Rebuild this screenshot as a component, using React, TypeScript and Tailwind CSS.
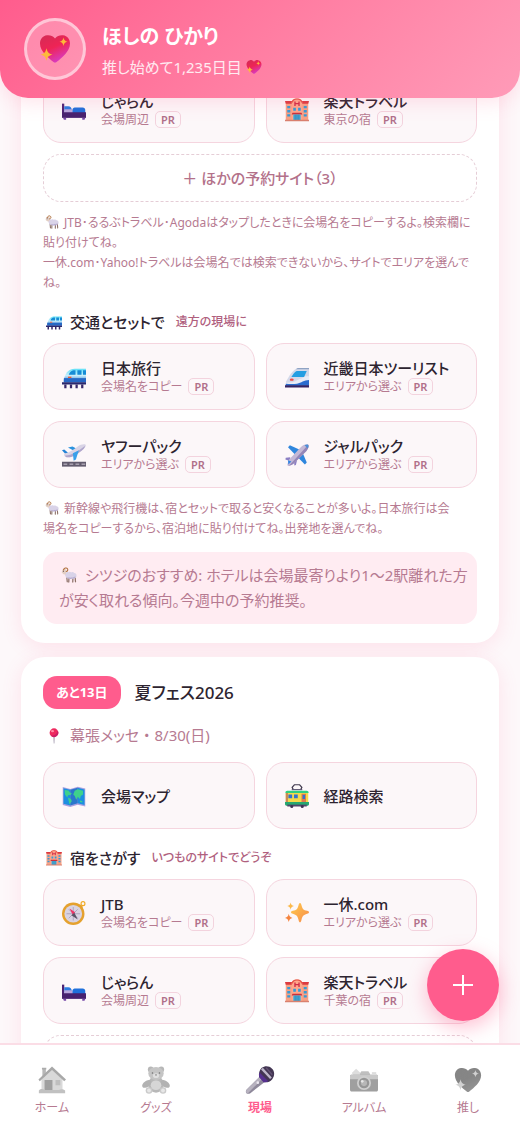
import type { ReactNode } from 'react';
import { clsx } from 'clsx';

type IconName =
    | 'heart'
    | 'bed'
    | 'hotel'
    | 'sheep'
    | 'monorail'
    | 'bullet'
    | 'takeoff'
    | 'plane'
    | 'pin'
    | 'map'
    | 'tram'
    | 'compass'
    | 'sparkles'
    | 'house'
    | 'bear'
    | 'mic'
    | 'camera';

const drawings: Record<IconName, ReactNode> = {
    heart: (
        <>
            <defs>
                <linearGradient id="heartFill" x1="0.2" y1="0" x2="0.7" y2="1">
                    <stop offset="0" stopColor="#d82a55" />
                    <stop offset="0.45" stopColor="#ee2455" />
                    <stop offset="1" stopColor="#d63ed0" />
                </linearGradient>
            </defs>
            <path d="M16 5.5C18 2.8 21 2 24 2.3c4.500.6 7 4.200 7 8.200 0 8-8.500 14.500-13.500 18.500-1 .8-2 .8-3 0C9.500 25 1 18.500 1 10.500c0-4 2.500-7.600 7-8.200 3-.3 6 .5 8 3.200z" fill="url(#heartFill)" />
            <path d="M7.500 15.200c.9 4 2.100 5.200 6 6.300-3.900 1.100-5.100 2.300-6 6.300-.9-4-2.100-5.200-6-6.300 3.900-1.100 5.100-2.300 6-6.300zM24.500 4.500c.6 2.700 1.400 3.500 4 4.200-2.600.7-3.400 1.500-4 4.200-.6-2.700-1.400-3.500-4-4.200 2.600-.7 3.400-1.500 4-4.200z" fill="#fdb93a" />
        </>
    ),
    bed: (
        <>
            <path d="M0 7.500h3V25H0z" fill="#4b2375" />
            <path d="M3 11h5.500c2.500 0 4.500 2 4.500 5v2H3z" fill="#2b7be0" />
            <path d="M3 15h9c1.500 0 2.500 1 2.500 3v2H3z" fill="#b9a6dc" />
            <path d="M14 14.500c1-1.600 2.400-2 4-2h9.500c2.300 0 3.500 1.500 3.500 3.500v4H14z" fill="#1f70db" />
            <path d="M0 19h32v7.500H0z" fill="#47216f" />
            <path d="M1.500 26.500h4V29h-3zM27 26.500h4l-1 2.500h-3z" fill="#7648a8" />
        </>
    ),
    hotel: (
        <>
            <path d="M1 6h30v24H1z" fill="#f8a184" />
            <path d="M0 4h32l-1 3.500H1z" fill="#dc3a3f" />
            <path d="M9 30V5.500C9 2 12 .500 16 .500S23 2 23 5.500V30z" fill="#ffa78b" />
            <path d="M9 6C9 2 12 .500 16 .500S23 2 23 6h-1.500C21 3.500 19 2 16 2s-5 1.500-5.500 4z" fill="#e45348" />
            <path d="M13.300 4.500v6M18.700 4.500v6M13.300 7.500h5.400" stroke="#cf2e48" strokeWidth="1.800" fill="none" />
            <path d="M3 10.500h4v3.200H3zM3 16h4v3.200H3zM3 21.500h4v3.200H3zM25 10.500h4v3.200h-4zM25 16h4v3.200h-4zM25 21.500h4v3.200h-4zM11 13h3.500v4H11zM17.500 13H21v4h-3.500z" fill="#359bd6" />
            <path d="M10 19.500h12l1 2.500H9z" fill="#c92f3c" />
            <path d="M11 22h10v8H11z" fill="#49b0dc" />
            <path d="M16 22v8M13.500 22v8M18.500 22v8" stroke="#286f9e" strokeWidth=".8" />
            <path d="M0 29h32v2H0z" fill="#d9806f" />
        </>
    ),
    sheep: (
        <>
            <path d="M11.500 19l1 10.500M16 20l-.5 10M24 20l-.5 10M28 18l1 11.500" stroke="#8d7168" strokeWidth="2.500" strokeLinecap="round" />
            <path d="M9 11.500c1.500-2 4-2 5.500-.9 2-1.500 4.500-1.200 6 .2 2-1.300 4.800-.7 6 1 3 .2 4.700 2.500 4.500 5 .3 3-1.500 5.700-4.500 5.700-1.700 1.600-4 1.500-5.500.3-2 1.300-4.500 1-6-.4-3 .4-5.700-1-6-4.400-2-2-1.700-4.800 0-6.500z" fill="#d9d3e8" />
            <path d="M12 20c3 2 5 .5 7 1.500 3-1.500 6 .5 10-3-.3 4-3 5-6 4.700-4 1.500-9 .8-11-3.200z" fill="#b7acd1" />
            <path d="M2 8c0-3 2.500-4.500 5-4 3.500 0 5 3 4 6l-2 5-4-.5-3.500-3.300z" fill="#e3cfc4" />
            <path d="M5 6c1-4 6-5.500 8-2.500 1.500 2.500 0 5.500-2.500 5.500" stroke="#b0713f" strokeWidth="2.200" fill="none" strokeLinecap="round" />
            <circle cx="4.800" cy="8.500" r="1" fill="#43303c" />
        </>
    ),
    monorail: (
        <>
            <defs>
                <linearGradient id="monoBody" x1="0" y1="0" x2="0" y2="1">
                    <stop offset="0" stopColor="#5fe0f7" />
                    <stop offset="0.5" stopColor="#c9eefc" />
                    <stop offset="1" stopColor="#2474cd" />
                </linearGradient>
            </defs>
            <path d="M32 5H17C9 5 6 10 3.500 15.500 2.500 18 2 20 2.500 23H32z" fill="url(#monoBody)" />
            <path d="M18 7h-3c-3.500.8-5 3-6 6h9zM20.500 7h5.500v6h-5.500zM28 7h4v6h-4z" fill="#168cd6" />
            <path d="M2.500 17.500H32V23H2.500z" fill="#2668c5" />
            <path d="M8 15.500h4.500v1.800H8z" fill="#ee5d35" />
            <path d="M0 23h32v3H0z" fill="#2a286e" />
            <path d="M3 26h3v5H3zM10.500 26h3v5h-3zM18 26h3v5h-3zM25.500 26h3v5h-3z" fill="#372869" />
        </>
    ),
    bullet: (
        <>
            <path d="M32 4H17C11 6 5 15 1.500 22L1 28h31z" fill="#d3d9ea" />
            <path d="M32 4H17l-2.500 1.700H32z" fill="#8fa3c4" />
            <path d="M15.500 8H29l-3.500 8H8.500c2-3.400 4-6.600 7-8z" fill="#249ee2" />
            <path d="M32 15h-5c-3 3-7 3-10 5-4 3-10 3.500-15.500 3.500V27H32z" fill="#e9ecf6" />
            <path d="M32 20c-7 0-10 4-16 5-5 .8-10 .5-15 0v2.500h31z" fill="#2b6ccf" />
            <ellipse cx="9" cy="19.500" rx="2.600" ry="1.600" fill="#f04c45" />
            <path d="M0 27h32v3H0z" fill="#342465" />
        </>
    ),
    takeoff: (
        <>
            <path d="M0 25h32v6.500H0z" fill="#625b6d" />
            <path d="M2 28.200h5M10 28.200h5M18 28.200h5M26 28.200h5" stroke="#d9d3df" strokeWidth="1.200" />
            <path d="M8 6l6-1.500L22 9l-5 2z" fill="#2b92de" />
            <path d="M0 9.500l3-1 5 4.500-3.500 1.500z" fill="#2383d6" />
            <path d="M3 14c6-1 12-5 18-9.500 3-2.200 8-3.500 10-2.500s0 4-3 6.500C22 13.500 15 19 8 19c-4 0-6-2-5-5z" fill="#d9d4e6" />
            <path d="M4 16.500C12 17 22 11 30.500 4c.2 1.800-1 3.300-2.500 4.500C22 13.500 15 19 8 19c-2 0-3.700-.8-4-2.500z" fill="#afa5cb" />
            <path d="M14.500 13.500l8-4-4 12.500-3 1.500z" fill="#39a0ea" />
        </>
    ),
    plane: (
        <>
            <path d="M19 8.500L6.500 3 4 5.500 13 15z" fill="#2f86dd" />
            <path d="M23.500 13L29 26l-2.500 2.500L17 19z" fill="#2f86dd" />
            <path d="M7 19l-6 .8L.500 22l6 2zM12 24l.5 6 2-.8 1.500-6z" fill="#8c7fc4" />
            <path d="M5 22.500L21 5.500C24 2.500 29 .8 31 2.200c1.500 2-.5 6-3 9L12 27c-2 2-5 3-7 3.500-2 0-2-1.500-1.500-3z" fill="#c3b8d6" />
            <path d="M31 2.200c1.500 2-.5 6-3 9L12 27c-2 2-5 3-7 3.500z" fill="#9486b8" />
            <path d="M26 3l4.500 4.300c.7-2 1-4 .3-5.100-1-.8-3 0-4.800.8z" fill="#4c8fd7" />
            <path d="M4 23l4.500 1.500-4 4z" fill="#3384e2" />
        </>
    ),
    pin: (
        <>
            <path d="M14.800 15h2.600L16.700 31h-1.200z" fill="#9b91a8" />
            <circle cx="16" cy="9.500" r="8.800" fill="#ee2a5f" />
            <path d="M23.500 5a8.800 8.800 0 0 1-14.300 10C16 16.500 22.500 12 23.500 5z" fill="#c91f67" />
            <ellipse cx="13" cy="6.300" rx="3" ry="2.300" fill="#ff8fa8" />
        </>
    ),
    map: (
        <>
            <path d="M1 4l10 2.500L21 3.500 31 6v24l-10-2.500L11 30.500 1 28z" fill="#a9a0e0" />
            <path d="M2 5.500l9 2.200v20.800l-9-2.200zM21 5l9 2.200v20.800L21 25.500z" fill="#1c8fe0" />
            <path d="M11 7.700L21 5v20.500l-10 3z" fill="#2a76cc" />
            <path d="M3.500 8l5 .5 2.500 3 2 .5-1.500 2.500L8 15l-1 3-3-4zM8 18l4 2 1 3-3 4-1-4zM17 9l4-2 7 2v5l-3 2-1 4-3-3-2 4-2-5-2-2z" fill="#3ed18c" />
            <path d="M24 22l3 .5v2l-3-.5z" fill="#3ed18c" />
        </>
    ),
    tram: (
        <>
            <path d="M11 7.500L9.500 4.500l3-3.500h7l3 3.500-1.500 3" stroke="#423b4f" strokeWidth="1.600" fill="none" />
            <path d="M9 7.500h14" stroke="#5c5470" strokeWidth="1.500" />
            <path d="M3 9h26c1.500 0 2.500 1 2.500 3H.500c0-2 1-3 2.500-3z" fill="#2fd080" />
            <path d="M1 12h30v15H1z" fill="#f5d94a" />
            <path d="M1 12h3v15H1z" fill="#c98954" />
            <path d="M4.500 14h5v5h-5zM12 14h5v5h-5z" fill="#3273cf" />
            <path d="M22 13h6v14h-6z" fill="#df7b4c" />
            <path d="M23.500 14.500h3.200V20h-3.200z" fill="#3273cf" />
            <path d="M0 24h32v2.500c0 1.500-1 2.500-2.500 2.500h-27C1 29 0 28 0 26.500z" fill="#26a870" />
            <path d="M3 27.500h26V30H3z" fill="#50476b" />
            <circle cx="9" cy="30" r="2" fill="#3c3351" />
            <circle cx="23" cy="30" r="2" fill="#3c3351" />
        </>
    ),
    compass: (
        <>
            <circle cx="28" cy="3.500" r="2.600" stroke="#f1ab24" strokeWidth="1.500" fill="none" />
            <path d="M23 6l4 3" stroke="#e29a2a" strokeWidth="3" />
            <circle cx="15" cy="17" r="15" fill="#e5a12e" />
            <circle cx="15" cy="17" r="11.800" fill="#d9d3e2" />
            <path d="M15 8v18M6 17h18M9 11l12 12M21 11L9 23" stroke="#9b90ae" strokeWidth=".9" />
            <path d="M10 10l7.500 5-3 3.500z" fill="#ef3568" />
            <path d="M21 24.500L12.500 19l4-3.500z" fill="#5a5266" />
        </>
    ),
    sparkles: (
        <>
            <defs>
                <linearGradient id="sparkFill" x1="0" y1="0" x2="1" y2="1">
                    <stop offset="0" stopColor="#ffcc4d" />
                    <stop offset="1" stopColor="#f7894a" />
                </linearGradient>
            </defs>
            <path d="M20 2.500c1.200 0 1.600 1.500 2 3 1.200 5 2.500 6.300 7.500 7.500 1.500.4 2.500 1 2.500 2s-1 1.600-2.500 2c-5 1.500-6.300 3-7.500 8-.4 1.500-.8 3.500-2 3.500s-1.600-2-2-3.500c-1.200-5-2.500-6.500-7.500-8-1.500-.4-2.500-1-2.500-2s1-1.600 2.500-2c5-1.200 6.300-2.500 7.500-7.500.4-1.500.8-3 2-3z" fill="url(#sparkFill)" />
            <path d="M7.500 2c.7 3 1.600 4 4.500 4.800-2.900.8-3.800 1.700-4.500 4.700-.7-3-1.600-3.900-4.500-4.700C5.900 6 6.800 5 7.500 2z" fill="#fbb94b" />
            <path d="M5 17c.8 3.500 1.800 4.700 5 5.500-3.200.9-4.200 2-5 5.500-.8-3.500-1.800-4.600-5-5.500 3.200-.8 4.200-2 5-5.500z" fill="#f5843f" />
        </>
    ),
    house: (
        <>
            <path d="M5 3h4v10H5z" fill="#999" />
            <path d="M4.500 2h5v2h-5z" fill="#8a8a8a" />
            <path d="M4 15L16 4l12 11v14H4z" fill="#c9c9c9" />
            <path d="M16 .500L32 15.500l-2 2L16 4.500 2 17.500l-1.500-2z" fill="#848484" />
            <path d="M7.500 16h9v12h-9z" fill="#787878" />
            <path d="M20 16h5.500v6H20z" fill="#a5a5a5" />
            <path d="M1 28c2-2.500 5-2 7-.5h16c2-1.500 5-1 7 .5v3H1z" fill="#a8a8a8" />
        </>
    ),
    bear: (
        <>
            <circle cx="10" cy="4" r="3.300" fill="#999" />
            <circle cx="22" cy="4" r="3.300" fill="#999" />
            <ellipse cx="16" cy="21" rx="9" ry="9.500" fill="#9b9b9b" />
            <ellipse cx="5.500" cy="20.500" rx="6" ry="3.500" transform="rotate(-35 5.500 20.500)" fill="#929292" />
            <ellipse cx="26.500" cy="20.500" rx="6" ry="3.500" transform="rotate(35 26.500 20.500)" fill="#929292" />
            <ellipse cx="16" cy="22" rx="6" ry="5.500" fill="#c6c6c6" />
            <ellipse cx="16" cy="8.500" rx="8.800" ry="7.500" fill="#adadad" />
            <circle cx="8" cy="28" r="3.800" fill="#b5b5b5" />
            <circle cx="24" cy="28" r="3.800" fill="#b5b5b5" />
            <circle cx="8" cy="28" r="2.200" fill="#dedede" />
            <circle cx="24" cy="28" r="2.200" fill="#dedede" />
            <ellipse cx="16" cy="11" rx="3.500" ry="2.700" fill="#d3d3d3" />
            <circle cx="12" cy="8" r=".9" fill="#333" />
            <circle cx="20" cy="8" r=".9" fill="#333" />
            <path d="M14.800 9.800h2.400L16 11.300z" fill="#333" />
        </>
    ),
    mic: (
        <>
            <path d="M16.500 11.500l6 6L5 31c-1.500 1-3.500 1-4.500 0s-.8-2.500 0-4z" fill="#8f899b" />
            <path d="M16.500 11.500l2.500 2.500L2 31.500c-1.500-.4-2.500-2-1.500-4z" fill="#b7b2bf" />
            <path d="M18 2c4-3 9-2 11.500.8C33 6 33 11 30 15c-2.500 3-6 4-9 3.500l-6-6c-.8-4 .5-8 3-10.500z" fill="#433653" />
            <path d="M15.500 7.500l10 10c-2 1.300-4 1.400-5.500 1l-5-6c-.5-2 0-3.500.5-5z" fill="#56308f" />
            <path d="M18.200 3l10.300 11" stroke="#bdb6ca" strokeWidth="2.800" />
            <path d="M23 2l7 8" stroke="#625173" strokeWidth="1.500" />
            <circle cx="13.500" cy="19" r="1.500" fill="#ece8f0" />
        </>
    ),
    camera: (
        <>
            <path d="M2 8l5-5 5 5-2 3H4z" fill="#cfcfcf" />
            <path d="M11 9l2-3h8l2 3v3H11z" fill="#a5a5a5" />
            <path d="M2 10h28c1.300 0 2 .7 2 2v15c0 1.300-.7 2-2 2H2c-1.300 0-2-.7-2-2V12c0-1.300.7-2 2-2z" fill="#777" />
            <path d="M0 11.500C0 10.700.7 10 2 10h28c1.300 0 2 .7 2 1.500V15H0z" fill="#b3b3b3" />
            <path d="M25 7h5v3h-5z" fill="#cfcfcf" />
            <circle cx="16" cy="19.500" r="8" fill="#bcbcbc" />
            <circle cx="16" cy="19.500" r="6" fill="#6a6a6a" />
            <circle cx="16" cy="19.500" r="3.500" fill="#999" />
            <circle cx="14" cy="17.500" r="1.500" fill="#ddd" />
        </>
    ),
};

const Icon = ({ name, className }: { name: IconName; className?: string }) => (
    <svg viewBox="0 0 32 32" aria-hidden="true" className={clsx('shrink-0 overflow-visible', className)}>
        {drawings[name]}
    </svg>
);

interface LinkItem {
    icon: IconName;
    title: string;
    sub?: string;
}

const LinkTile = ({ icon, title, sub }: LinkItem) => (
    <a
        href="#"
        className="flex h-[67px] min-w-0 items-center gap-[15px] rounded-[18px] border border-[#f5d5df] bg-[#fcf7f9] pl-[18px]"
    >
        <Icon name={icon} className="size-6" />
        <span className="flex min-w-0 flex-col whitespace-nowrap">
            <span className="text-[15px] leading-5 font-medium text-[#2d2430]">{title}</span>
            {sub && (
                <span className="flex items-center gap-[6px] text-xs leading-[17px] text-[#b67a91]">
                    {sub}
                    <span className="rounded-[5px] border border-[#f3d3de] px-[5px] text-[11px] leading-[15px] font-semibold text-[#b0708a]">
                        PR
                    </span>
                </span>
            )}
        </span>
    </a>
);

const TileGrid = ({ items }: { items: LinkItem[] }) => (
    <div className="grid grid-cols-2 gap-[11px]">
        {items.map((item) => (
            <LinkTile key={item.title} {...item} />
        ))}
    </div>
);

const SectionHeading = ({ icon, title, note }: { icon: IconName; title: string; note: string }) => (
    <h3 className="flex h-[50px] items-center pt-2 pl-[3px] text-[15px] font-medium text-[#2d2430]">
        <Icon name={icon} className="mr-2 size-4" />
        {title}
        <small className="ml-[11px] text-xs text-[#b0607e]">{note}</small>
    </h3>
);

const MoreButton = () => (
    <button
        type="button"
        className="mt-[11px] h-12 w-full rounded-[18px] border border-dashed border-[#e5cdd6] text-[15px] font-medium text-[#b3718a]"
    >
        ＋ ほかの予約サイト（3）
    </button>
);

const Note = ({ children }: { children: ReactNode }) => (
    <p className="mt-[11px] text-xs leading-5 text-[#b67a91]">
        <Icon name="sheep" className="mr-[5px] ml-[2px] inline size-[14px] align-[-2px]" />
        {children}
    </p>
);

const EventCard = ({ children, className }: { children: ReactNode; className?: string }) => (
    <section className={clsx('rounded-3xl bg-white px-[22px] pb-[19px] shadow-[0_4px_20px_rgba(255,92,141,0.14)]', className)}>
        {children}
    </section>
);

const tabs: { icon: IconName; label: string }[] = [
    { icon: 'house', label: 'ホーム' },
    { icon: 'bear', label: 'グッズ' },
    { icon: 'mic', label: '現場' },
    { icon: 'camera', label: 'アルバム' },
    { icon: 'heart', label: '推し' },
];

const App = () => {
    const activeTab = '現場';

    return (
        <div className="relative flex h-screen flex-col overflow-hidden bg-[#fdf8fa] font-['Noto_Sans','Noto_Sans_CJK_JP',sans-serif] [font-feature-settings:'palt']">
            <header className="z-10 flex h-[98px] shrink-0 items-center gap-4 rounded-b-[28px] bg-linear-135 from-[#ff5c8d] to-[#ff9bb8] px-6 text-white shadow-[0_4px_20px_rgba(255,92,141,0.18)]">
                <div className="flex size-[62px] items-center justify-center rounded-full border-[3px] border-white/50 bg-white/25">
                    <Icon name="heart" className="size-8" />
                </div>
                <div className="pt-1">
                    <h1 className="text-xl leading-8 font-bold">ほしの ひかり</h1>
                    <p className="flex items-center gap-1 text-[15px] leading-7 text-white/85">
                        推し始めて1,235日目
                        <Icon name="heart" className="size-4" />
                    </p>
                </div>
            </header>

            {/* slides under the rounded header */}
            <main className="-mt-8 flex min-h-0 flex-1 flex-col gap-[14px] overflow-y-auto px-[21px] [scrollbar-width:none]">
                <EventCard className="pt-[10px]">
                    <TileGrid
                        items={[
                            { icon: 'bed', title: 'じゃらん', sub: '会場周辺' },
                            { icon: 'hotel', title: '楽天トラベル', sub: '東京の宿' },
                        ]}
                    />
                    <MoreButton />
                    <Note>
                        JTB･るるぶトラベル･Agodaはタップしたときに会場名をコピーするよ。検索欄に
                        <br />
                        貼り付けてね。
                        <br />
                        一休.com･Yahoo!トラベルは会場名では検索できないから、サイトでエリアを選んで
                        <br />
                        ね。
                    </Note>
                    <SectionHeading icon="monorail" title="交通とセットで" note="遠方の現場に" />
                    <TileGrid
                        items={[
                            { icon: 'monorail', title: '日本旅行', sub: '会場名をコピー' },
                            { icon: 'bullet', title: '近畿日本ツーリスト', sub: 'エリアから選ぶ' },
                            { icon: 'takeoff', title: 'ヤフーパック', sub: 'エリアから選ぶ' },
                            { icon: 'plane', title: 'ジャルパック', sub: 'エリアから選ぶ' },
                        ]}
                    />
                    <Note>
                        新幹線や飛行機は、宿とセットで取ると安くなることが多いよ。日本旅行は会
                        <br />
                        場名をコピーするから、宿泊地に貼り付けてね。出発地を選んでね。
                    </Note>
                    <p className="mt-[13px] rounded-[14px] bg-[#ffecf2] py-[11px] pr-2 pl-4 text-[15px] leading-[25px] text-[#b67a91]">
                        <Icon name="sheep" className="mr-2 ml-[2px] inline size-4 align-[-2px]" />
                        シツジのおすすめ: ホテルは会場最寄りより1～2駅離れた方
                        <br />
                        が安く取れる傾向。今週中の予約推奨。
                    </p>
                </EventCard>

                <EventCard className="pt-[19px]">
                    <div className="flex items-center gap-[14px]">
                        <span className="rounded-[14px] bg-[#ff5c8d] px-[13px] text-[13px] leading-[33px] font-bold text-white">
                            あと13日
                        </span>
                        <h2 className="text-[17px] font-medium text-[#2d2430]">夏フェス2026</h2>
                    </div>
                    <p className="flex h-[53px] items-center pl-[3px] text-[15px] text-[#b67a91]">
                        <Icon name="pin" className="mr-2 size-4" />
                        幕張メッセ ・ 8/30(日)
                    </p>
                    <TileGrid
                        items={[
                            { icon: 'map', title: '会場マップ' },
                            { icon: 'tram', title: '経路検索' },
                        ]}
                    />
                    <SectionHeading icon="hotel" title="宿をさがす" note="いつものサイトでどうぞ" />
                    <TileGrid
                        items={[
                            { icon: 'compass', title: 'JTB', sub: '会場名をコピー' },
                            { icon: 'sparkles', title: '一休.com', sub: 'エリアから選ぶ' },
                            { icon: 'bed', title: 'じゃらん', sub: '会場周辺' },
                            { icon: 'hotel', title: '楽天トラベル', sub: '千葉の宿' },
                        ]}
                    />
                    <MoreButton />
                </EventCard>
            </main>

            <button
                type="button"
                aria-label="現場を追加"
                className="absolute right-[21px] bottom-[104px] z-20 flex size-[72px] items-center justify-center rounded-full bg-[#ff5c8d] text-white shadow-[0_6px_20px_rgba(255,92,141,0.4)]"
            >
                <svg viewBox="0 0 20 20" className="size-5" stroke="currentColor" strokeWidth="2">
                    <path d="M10 0v20M0 10h20" />
                </svg>
            </button>

            <nav className="z-10 grid h-[82px] shrink-0 grid-cols-5 border-t-2 border-[#fbdde6] bg-white">
                {tabs.map(({ icon, label }) => (
                    <a
                        key={label}
                        href="#"
                        className={clsx(
                            'flex flex-col items-center gap-1 pt-[21px] text-xs leading-5',
                            label === activeTab ? 'font-bold text-[#ff5c8d]' : 'text-[#b67a91]'
                        )}
                    >
                        <Icon name={icon} className={clsx('size-7', label !== activeTab && 'opacity-70 grayscale')} />
                        {label}
                    </a>
                ))}
            </nav>
        </div>
    );
};

export default App;
